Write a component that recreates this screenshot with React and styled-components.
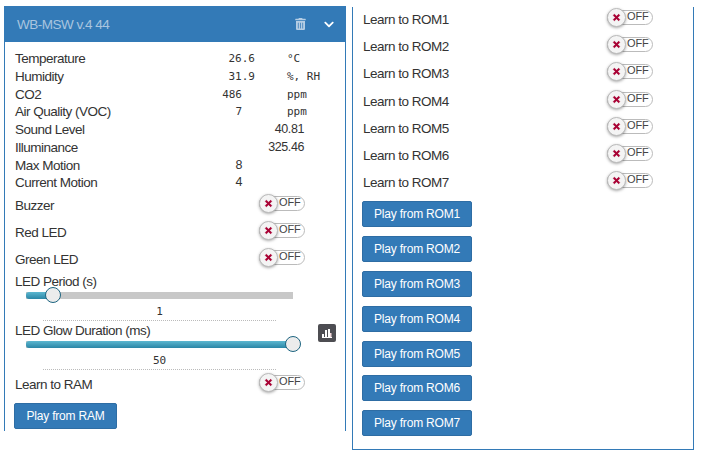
import React from "react";
import styled, { createGlobalStyle } from "styled-components";
import { FaTrashAlt, FaChevronDown, FaTimes } from "react-icons/fa";

const Global = createGlobalStyle`
  html, body { margin: 0; padding: 0; background: #fff; }
  body { font-family: "Liberation Sans", Arial, sans-serif; font-size: 13.5px; letter-spacing: -0.5px; color: #333; }
`;

const Page = styled.div`
  display: flex;
  align-items: flex-start;
  width: 701px;
  height: 457px;
  overflow: hidden;
  padding-left: 4px;
  box-sizing: border-box;
`;

const LeftPanel = styled.section`
  width: 342px;
  height: 425px;
  margin-top: 6px;
  box-sizing: border-box;
  border-left: 1px solid #337ab7;
  border-right: 1px solid #337ab7;
`;

const RightPanel = styled.section`
  width: 342px;
  height: 443px;
  margin: 7px 0 0 6px;
  box-sizing: border-box;
  border: 1px solid #337ab7;
  border-top: 0;
  padding: 0 0 0 10px;
`;

const Header = styled.header`
  height: 36px;
  margin: 0 -1px;
  background: #337ab7;
  display: flex;
  align-items: center;
  padding: 0 12px 0 13px;
`;

const Title = styled.h3`
  flex: 1;
  margin: 0;
  font-size: 13.5px;
  font-weight: 400;
  color: #a9c5df;
`;

const TrashIcon = styled(FaTrashAlt)`
  width: 11px;
  height: 12px;
  color: #b4cde4;
  margin-right: 18px;
`;

const ChevronIcon = styled(FaChevronDown)`
  width: 10px;
  height: 11px;
  color: #fff;
`;

const Body = styled.div`
  padding: 7px 0 0 10px;
`;

const Measure = styled.div`
  display: grid;
  grid-template-columns: 190px 82px 40px;
  height: 17.75px;
  line-height: 19px;
`;

const Value = styled.span`
  text-align: right;
  padding-right: ${(p) => p.$pad}px;
  font-family: ${(p) => (p.$mono ? '"DejaVu Sans Mono", monospace' : "inherit")};
  font-size: ${(p) => (p.$mono ? "11px" : "12.5px")};
  letter-spacing: ${(p) => (p.$mono ? "0" : "-0.4px")};
  grid-column: ${(p) => (p.$wide ? "2 / 4" : "2")};
`;

const Unit = styled.span`
  font-family: "DejaVu Sans Mono", monospace;
  font-size: 11px;
  letter-spacing: 0;
`;

const ToggleRow = styled.div`
  display: grid;
  grid-template-columns: 244px auto;
  align-items: center;
  height: ${(p) => p.$h}px;
`;

const RowLabel = styled.span`
  padding-top: 2px;
`;

const Toggle = styled.span`
  position: relative;
  display: block;
  width: 46px;
  height: 15px;
  margin-top: -2px;
  box-sizing: border-box;
  border: 1px solid #bbb;
  border-radius: 8px;
  background: #fff;
  font-size: 11px;
  line-height: 11px;
  letter-spacing: -0.1px;
  color: #444;
  padding-left: 19px;
`;

const Knob = styled.span`
  position: absolute;
  left: -1px;
  top: -3px;
  width: 19px;
  height: 19px;
  box-sizing: border-box;
  border: 1px solid #bbb;
  border-radius: 50%;
  background: #f4f4f4;
  box-shadow: 0 1px 3px rgba(0, 0, 0, 0.35);
  display: flex;
  align-items: center;
  justify-content: center;
  color: #a80033;
`;

const CrossIcon = styled(FaTimes)`
  width: 9px;
  height: 9px;
  stroke: currentColor;
  stroke-width: 40px;
`;

const FieldLabel = styled.div`
  display: flex;
  justify-content: space-between;
  align-items: flex-start;
  height: 18px;
  line-height: 20px;
  padding-right: 9px;
`;

const ChartButton = styled.span`
  width: 18px;
  height: 18px;
  margin-top: 3px;
  background: #4d4d52;
  border-radius: 2px;
  display: flex;
  align-items: center;
  justify-content: center;
`;

const Track = styled.div`
  position: relative;
  width: 267px;
  height: 7px;
  margin: 2px 0 0 11px;
  background: #c8c8c8;
`;

const Fill = styled.div`
  height: 100%;
  border-radius: 3px 0 0 3px;
  background: linear-gradient(#5cb7d0, #2b86a6);
`;

const Thumb = styled.div`
  position: absolute;
  top: -5px;
  width: 16px;
  height: 16px;
  margin-left: -8px;
  box-sizing: border-box;
  border: 1.5px solid #1c6480;
  border-radius: 50%;
  background: #ececec;
`;

const SliderValue = styled.div`
  width: 233px;
  height: 20px;
  margin: 2px 0 0 28px;
  padding-top: 4px;
  box-sizing: border-box;
  border-bottom: 1px dotted #bbb;
  text-align: center;
  font-family: "DejaVu Sans Mono", monospace;
  font-size: 11px;
  letter-spacing: 0;
  line-height: 14px;
`;

const Button = styled.button`
  display: block;
  height: 26px;
  width: ${(p) => p.$w}px;
  padding: 0;
  margin: ${(p) => p.$m};
  border: 1px solid #2e6da4;
  border-radius: 2px;
  background: #337ab7;
  color: #fff;
  font-family: inherit;
  font-size: 12px;
  letter-spacing: -0.2px;
`;

const RomRows = styled.div`
  margin-top: -2px;
`;

const Switch = () => (
  <Toggle>
    <Knob><CrossIcon /></Knob>
    OFF
  </Toggle>
);

const Slider = ({ pct }) => (
  <Track>
    <Fill style={{ width: `${pct}%` }} />
    <Thumb style={{ left: `${pct}%` }} />
  </Track>
);

const BarsIcon = () => (
  <svg width="10" height="9" viewBox="0 0 10 9" fill="#fff">
    <rect x="0" y="5" width="2" height="3" />
    <rect x="3" y="1" width="2" height="7" />
    <rect x="6" y="0" width="2" height="8" />
    <rect x="8" y="4" width="1.5" height="4" fill="#f3d9dc" />
    <rect x="0" y="8" width="10" height="1" />
  </svg>
);

const roms = [1, 2, 3, 4, 5, 6, 7];

export default function App() {
  return (
    <Page>
      <Global />
      <LeftPanel>
        <Header>
          <Title>WB-MSW v.4 44</Title>
          <TrashIcon />
          <ChevronIcon />
        </Header>
        <Body>
          <Measure><span>Temperature</span><Value $mono $pad={32}>26.6</Value><Unit>°C</Unit></Measure>
          <Measure><span>Humidity</span><Value $mono $pad={32}>31.9</Value><Unit>%, RH</Unit></Measure>
          <Measure><span>CO2</span><Value $mono $pad={45}>486</Value><Unit>ppm</Unit></Measure>
          <Measure><span>Air Quality (VOC)</span><Value $mono $pad={45}>7</Value><Unit>ppm</Unit></Measure>
          <Measure><span>Sound Level</span><Value $wide $pad={23}>40.81</Value></Measure>
          <Measure><span>Illuminance</span><Value $wide $pad={23}>325.46</Value></Measure>
          <Measure><span>Max Motion</span><Value $pad={45}>8</Value></Measure>
          <Measure><span>Current Motion</span><Value $pad={45}>4</Value></Measure>
          <ToggleRow $h={27}><RowLabel>Buzzer</RowLabel><Switch /></ToggleRow>
          <ToggleRow $h={27}><RowLabel>Red LED</RowLabel><Switch /></ToggleRow>
          <ToggleRow $h={27}><RowLabel>Green LED</RowLabel><Switch /></ToggleRow>
          <FieldLabel>LED Period (s)</FieldLabel>
          <Slider pct={10} />
          <SliderValue>1</SliderValue>
          <FieldLabel>
            LED Glow Duration (ms)
            <ChartButton><BarsIcon /></ChartButton>
          </FieldLabel>
          <Slider pct={100} />
          <SliderValue>50</SliderValue>
          <ToggleRow $h={27}><RowLabel>Learn to RAM</RowLabel><Switch /></ToggleRow>
          <Button $w={103} $m="6px 0 0 -1px">Play from RAM</Button>
        </Body>
      </LeftPanel>
      <RightPanel>
        <RomRows>
          {roms.map((n) => (
            <ToggleRow key={n} $h={27.2}>
              <RowLabel>Learn to ROM{n}</RowLabel>
              <Switch />
            </ToggleRow>
          ))}
        </RomRows>
        <div>
          {roms.map((n) => (
            <Button key={n} $w={110} $m={n === 1 ? "6px 0 0 -1px" : "8.8px 0 0 -1px"}>
              Play from ROM{n}
            </Button>
          ))}
        </div>
      </RightPanel>
    </Page>
  );
}
